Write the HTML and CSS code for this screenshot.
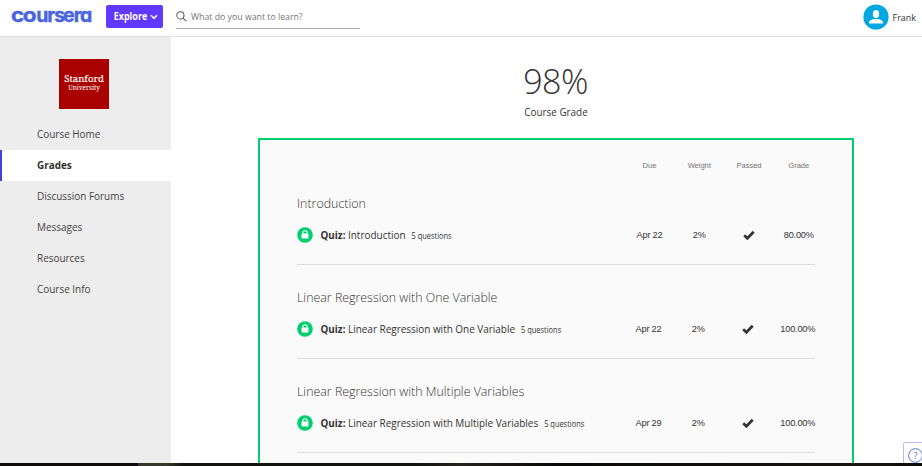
FILE: index.html
```html
<!DOCTYPE html>
<html lang="en">
<head>
<meta charset="utf-8">
<title>Grades | Coursera</title>
<link rel="stylesheet" href="styles.css">
</head>
<body>
<svg class="defs" aria-hidden="true">
  <symbol id="lock" viewBox="0 0 16 16"><circle cx="8" cy="8" r="7.8" fill="#00cf70"/><path d="M5.8 7V5.9a2.2 2.2 0 0 1 4.4 0V7" fill="none" stroke="#fff" stroke-width="1.1"/><rect x="4.6" y="6.6" width="6.8" height="5" rx=".6" fill="#fff"/></symbol>
  <symbol id="check" viewBox="0 0 12 10"><path d="M1.2 5.2 4.4 8.2 10.7 1.8" fill="none" stroke="#333" stroke-width="2.7"/></symbol>
</svg>
<header class="topbar">
  <svg class="brand" viewBox="0 0 82 26"><text y="18.5" transform="scale(1.15 1)"><tspan x="-.8 9.3">co</tspan></text><text y="18.5"><tspan x="24.3 35.3 42.3 51 61.8 67.9">ursera</tspan></text></svg>
  <button class="explore"><span class="tall">Explore</span><svg viewBox="0 0 8 6"><path d="M1 1.2 4 4.3 7 1.2"/></svg></button>
  <div class="search">
    <svg viewBox="0 0 12 12"><circle cx="4.8" cy="4.8" r="3.9"/><path d="m7.7 7.7 3.5 3.4"/></svg>
    <span class="tall">What do you want to learn?</span>
  </div>
  <div class="account">
    <svg viewBox="0 0 26 26"><circle cx="13" cy="13" r="12.6" fill="#00a7e1"/><ellipse cx="13" cy="10" rx="3.2" ry="4" fill="#fff"/><path d="M6 19.5v-1.3c0-1.8 2.5-2.8 4.8-3.3h4.4c2.3.5 4.8 1.5 4.8 3.3v1.3z" fill="#fff"/></svg>
    <span class="tall">Frank</span><i class="caret"></i>
  </div>
</header>
<div class="body">
  <aside class="sidebar">
    <div class="school"><b>Stanford</b><small>University</small></div>
    <nav>
      <a><span class="tall">Course Home</span></a>
      <a class="active"><span class="tall">Grades</span></a>
      <a><span class="tall">Discussion Forums</span></a>
      <a><span class="tall">Messages</span></a>
      <a><span class="tall">Resources</span></a>
      <a><span class="tall">Course Info</span></a>
    </nav>
  </aside>
  <main>
    <div class="total">98%</div>
    <div class="total-label tall">Course Grade</div>
    <section class="grades">
      <div class="cols head"><span>Due</span><span>Weight</span><span>Passed</span><span>Grade</span></div>
      <article class="module first">
        <h2>Introduction</h2>
        <div class="row"><svg class="lock"><use href="#lock"/></svg><b class="tall">Quiz:</b><span class="name tall">Introduction</span><small class="tall">5 questions</small>
          <div class="cols"><span>Apr 22</span><span>2%</span><span><svg class="check"><use href="#check"/></svg></span><span>80.00%</span></div></div>
      </article>
      <article class="module">
        <h2>Linear Regression with One Variable</h2>
        <div class="row"><svg class="lock"><use href="#lock"/></svg><b class="tall">Quiz:</b><span class="name tall">Linear Regression with One Variable</span><small class="tall">5 questions</small>
          <div class="cols"><span>Apr 22</span><span>2%</span><span><svg class="check"><use href="#check"/></svg></span><span>100.00%</span></div></div>
      </article>
      <article class="module">
        <h2>Linear Regression with Multiple Variables</h2>
        <div class="row"><svg class="lock"><use href="#lock"/></svg><b class="tall">Quiz:</b><span class="name tall">Linear Regression with Multiple Variables</span><small class="tall">5 questions</small>
          <div class="cols"><span>Apr 29</span><span>2%</span><span><svg class="check"><use href="#check"/></svg></span><span>100.00%</span></div></div>
      </article>
    </section>
  </main>
</div>
<div class="help"><svg viewBox="0 0 14 14"><circle cx="7" cy="7" r="6.4"/><text x="7" y="10">?</text></svg></div>
<footer class="strip"></footer>
</body>
</html>
```

FILE: styles.css
```css
* { box-sizing: border-box; }
body { position: relative; margin: 0; width: 922px; height: 466px; overflow: hidden; display: flex; flex-direction: column; background: #fff; color: #333; font-family: "Open Sans", sans-serif; font-size: 9.95px; }
.defs { display: none; }
.tall { display: inline-block; transform: scaleY(1.09); }
.topbar { flex: none; height: 37px; border-bottom: 1px solid #e1e1e1; display: flex; align-items: flex-start; padding-left: 12px; }
.brand { width: 82px; height: 26px; margin-top: 3px; overflow: visible; }
.brand text { font: 700 19.5px Inter, sans-serif; font-feature-settings: "cv11"; fill: #4a63e0; stroke: #4a63e0; stroke-width: .4; }
.explore { width: 57px; height: 23px; margin: 5px 0 0 12px; padding: 0 0 0 3px; border: 0; border-radius: 2px; background: #6038ff; color: #fff; font: 700 9px "Open Sans", sans-serif; display: flex; align-items: center; justify-content: center; gap: 3px; }
.explore svg { width: 8px; height: 6px; fill: none; stroke: #fff; stroke-width: 1.6; }
.search { width: 184px; height: 24px; margin: 5px 0 0 13px; border-bottom: 1px solid #aaa; display: flex; align-items: center; gap: 4px; color: #757575; font-size: 8.75px; white-space: nowrap; }
.search svg { width: 11px; height: 11px; fill: none; stroke: #555; stroke-width: 1.1; }
.account { margin: 4px 0 0 auto; display: flex; align-items: center; font-size: 9px; width: 59px; gap: 3.5px; white-space: nowrap; }
.account > svg { width: 26px; height: 26px; flex: none; }
.caret { flex: none; width: 5px; height: 3px; margin-left: 2px; background: #aaa; clip-path: polygon(0 0, 100% 0, 50% 100%); }
.body { flex: 1; min-height: 0; display: flex; overflow: hidden; }
.sidebar { width: 171px; flex: none; background: #ededed; padding-top: 22px; }
.school { width: 50px; height: 50px; margin: 0 0 10px 59px; background: #a90000; color: #fff; text-align: center; font-family: "Noto Serif", "Liberation Serif", serif; padding-top: 13px; }
.school b { display: block; font-size: 9.6px; line-height: 14px; font-weight: 400; -webkit-text-stroke: .15px #fff; }
.school small { display: block; font-size: 6.4px; line-height: 8px; margin-top: -2px; }
nav a { display: block; height: 31.1px; line-height: 31px; padding-left: 37px; color: #444; white-space: nowrap; }
nav .active { background: #fff; border-left: 2px solid #4141d5; padding-left: 35px; font-weight: 700; color: #333; }
main { flex: 1; padding-left: 87px; }
.total { width: 595px; height: 38px; margin-top: 25px; text-align: center; font-size: 34px; font-weight: 300; line-height: 38px; letter-spacing: -.6px; }
.total-label { display: block; width: 596px; margin-top: 5px; text-align: center; font-size: 9.9px; line-height: 15px; }
.grades { width: 596px; height: 360px; margin-top: 18px; border: 2px solid #00cf70; background: #fafafa; padding: 20px 37px 0; }
.cols { display: grid; grid-template-columns: 50px 49.5px 50px 49.5px; margin: 0 -8.5px 0 auto; justify-content: end; text-align: center; font-family: "Liberation Sans", sans-serif; font-size: 9.2px; letter-spacing: -.2px; color: #333; white-space: nowrap; align-items: center; }
.cols span { transform: scaleY(1.05); }
.cols.head { font-size: 7.6px; letter-spacing: -.05px; color: #757575; line-height: 12px; }
.module { height: 94px; border-bottom: 1px solid #ddd; padding-top: 23px; }
.module.first { height: 93px; padding-top: 22px; }
h2 { margin: 0; font-size: 12.4px; line-height: 20px; font-weight: 300; transform: scaleY(1.07); }
.row { display: flex; align-items: center; height: 20px; margin-top: 11px; white-space: nowrap; }
.lock { width: 16px; height: 16px; margin-right: 7.5px; flex: none; }
.row b { font-size: 9.9px; }
.name { margin-left: 2.5px; }
.row small { margin-left: 6px; padding-top: 1px; font-size: 7.45px; }
.module:not(.first) .cols { margin-right: -7.5px; }
.check { display: block; width: 12px; height: 10px; margin: 0 auto; }
.help { position: absolute; left: 903px; top: 442px; width: 30px; height: 22px; border: 1px solid #b9b9ee; border-radius: 2px; background: #fff; padding: 5px 0 0 4px; }
.help svg { display: block; width: 15px; height: 15px; fill: none; stroke: #5570d5; stroke-width: .9; }
.help text { font: 8px "Open Sans", sans-serif; text-anchor: middle; fill: #4a63e0; stroke: none; }
.strip { position: relative; flex: none; height: 3px; background: linear-gradient(90deg, #100c0c 0 15%, #37382c 15% 18%, #11120f 20% 45%, #24221b 50%, #090909 60%, #17150f 95%, #090909); }
```
